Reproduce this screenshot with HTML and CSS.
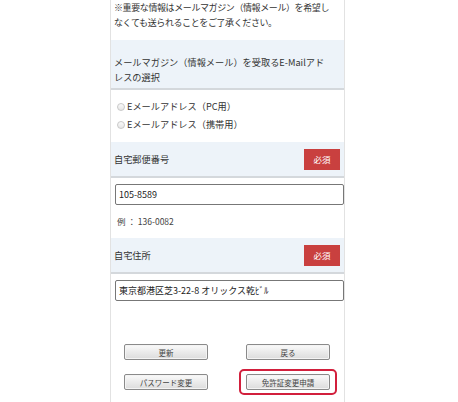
FILE: index.html
```html
<!DOCTYPE html>
<html lang="ja">
<head>
  <meta charset="UTF-8" />
  <meta name="viewport" content="width=device-width, initial-scale=1.0" />
  <title>会員情報変更</title>
  <link rel="stylesheet" href="styles.css">
</head>
<body>
  <div class="panel">
    <p class="note">※重要な情報はメールマガジン（情報メール）を希望しなくても送られることをご了承ください。</p>

    <div class="field-head tall">メールマガジン（情報メール）を受取るE-Mailアドレスの選択</div>
    <div class="radios">
      <label class="radio"><span class="dot"></span>Eメールアドレス（PC用）</label>
      <label class="radio"><span class="dot"></span>Eメールアドレス（携帯用）</label>
    </div>

    <div class="field-head">
      <span>自宅郵便番号</span>
      <span class="badge">必須</span>
    </div>
    <div class="field-body">
      <div class="input">105-8589</div>
      <p class="example">例 ： 136-0082</p>
    </div>

    <div class="field-head">
      <span>自宅住所</span>
      <span class="badge">必須</span>
    </div>
    <div class="field-body">
      <div class="input">東京都港区芝3-22-8 オリックス乾ﾋﾞﾙ</div>
    </div>

    <div class="buttons">
      <button class="btn">更新</button>
      <button class="btn">戻る</button>
      <button class="btn">パスワード変更</button>
      <span class="highlight"><button class="btn">免許証変更申請</button></span>
    </div>
  </div>
</body>
</html>
```

FILE: styles.css
```css
body {
  margin: 0;
  background: #fff;
  font-family: "Noto Sans CJK JP", "Noto Sans", sans-serif;
  color: #333;
}

.panel {
  width: 233px;
  height: 402px;
  margin-left: 110px;
  border-left: 1px solid #e2e2e2;
  border-right: 1px solid #e2e2e2;
  overflow: hidden;
}

.note {
  margin: 0;
  padding: 0 8px 10px 3px;
  font-size: 9px;
  line-height: 15px;
  letter-spacing: -0.4px;
}

.field-head {
  display: flex;
  justify-content: space-between;
  align-items: center;
  background: #edf3f9;
  border-bottom: 2px solid #d4d8dc;
  padding: 7px 4px 6px 3px;
  font-size: 9.2px;
  line-height: 15px;
}

.field-head.tall {
  display: block;
  padding: 15px 16px 3px 3px;
}

.badge {
  background: #c9403f;
  color: #fff;
  font-size: 8.5px;
  line-height: 21px;
  width: 36px;
  text-align: center;
}

.radios {
  display: flex;
  flex-direction: column;
  gap: 3px;
  padding: 9px 0 10px 6px;
}

.radio {
  display: flex;
  align-items: center;
  gap: 2px;
  font-size: 9.2px;
  line-height: 15px;
}

.dot {
  width: 8px;
  height: 8px;
  border-radius: 50%;
  border: 1px solid #c8c8c8;
  background: linear-gradient(#fafafa, #e6e6e6);
  box-sizing: border-box;
}

.field-body {
  padding: 6px 0 9px 4px;
}

.input {
  border: 1px solid #777;
  border-radius: 2px;
  height: 19px;
  line-height: 19px;
  padding: 0 3px;
  font-size: 9px;
  color: #222;
}

.example {
  margin: 9px 0 0 0;
  padding-left: 2px;
  font-size: 8.5px;
  line-height: 15px;
  color: #444;
}

.buttons {
  display: grid;
  grid-template-columns: 84px 84px;
  justify-content: space-between;
  row-gap: 14px;
  padding: 34px 14px 0 13px;
}

.btn {
  display: block;
  width: 84px;
  height: 16px;
  padding: 0;
  border: 1px solid #8a8a8a;
  border-radius: 2px;
  background: linear-gradient(#fafafa, #dcdcdc);
  font-family: inherit;
  font-size: 7.5px;
  color: #444;
  box-shadow: inset 0 0 0 1px #f4f4f4;
}

.highlight {
  position: relative;
}

.highlight::after {
  content: "";
  position: absolute;
  left: -7px;
  top: -5px;
  right: -7px;
  bottom: -5px;
  border: 2px solid #d21f3c;
  border-radius: 5px;
}
```
